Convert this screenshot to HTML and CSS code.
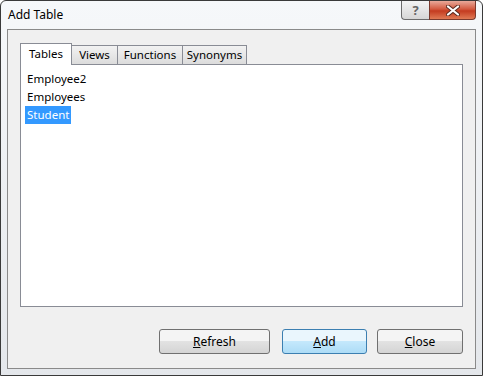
FILE: index.html
```html
<!DOCTYPE html>
<html lang="en">
<head>
    <meta charset="UTF-8">
    <title>Add Table</title>
    <link rel="stylesheet" href="styles.css">
</head>
<body>
    <div class="window">
        <div class="titlebar">
            <span class="title">Add Table</span>
            <div class="caption-buttons">
                <div class="cap help">?</div>
                <div class="cap close">
                    <svg width="14" height="11" viewBox="0 0 14 11">
                        <path d="M2 1.5 L12 9.5 M12 1.5 L2 9.5" stroke="#5a2a20" stroke-width="4" stroke-linecap="round"/>
                        <path d="M2 1.5 L12 9.5 M12 1.5 L2 9.5" stroke="#fff" stroke-width="2.2" stroke-linecap="round"/>
                    </svg>
                </div>
            </div>
        </div>
        <div class="client">
            <div class="tabs">
                <div class="tab active">Tables</div>
                <div class="tab views">Views</div>
                <div class="tab functions">Functions</div>
                <div class="tab synonyms">Synonyms</div>
            </div>
            <div class="panel">
                <div class="item">Employee2</div>
                <div class="item">Employees</div>
                <div class="item selected">Student</div>
            </div>
            <div class="buttons">
                <button type="button" class="refresh"><u>R</u>efresh</button>
                <button type="button" class="add"><u>A</u>dd</button>
                <button type="button" class="close-btn"><u>C</u>lose</button>
            </div>
        </div>
    </div>
</body>
</html>
```
FILE: styles.css
```css
html, body {
    margin: 0;
    padding: 0;
    background-color: #ffffff;
}
body {
    font-family: "Noto Sans", "Open Sans", sans-serif;
    font-size: 11.5px;
    color: #000;
}
.window {
    width: 481px;
    height: 374px;
    border: 1px solid #3a3a3a;
    border-radius: 6px 6px 0 0;
    background: linear-gradient(#f6f8fa, #e4e7eb);
    display: flex;
    flex-direction: column;
}
.titlebar {
    height: 28px;
    display: flex;
    justify-content: space-between;
    align-items: flex-start;
    padding: 0 6px 0 7px;
}
.title {
    margin-top: 5px;
    font-size: 12px;
}
.caption-buttons {
    display: flex;
}
.cap {
    height: 18px;
    border: 1px solid #6b6b6b;
    border-top: none;
    display: flex;
    align-items: center;
    justify-content: center;
}
.help {
    width: 27px;
    border-radius: 0 0 0 4px;
    background: linear-gradient(#f4f4f4, #d6d6d6);
    color: #666;
    font-weight: bold;
    font-size: 13px;
    border-right: none;
}
.close {
    width: 45px;
    border-radius: 0 0 4px 0;
    background: linear-gradient(#e9a99a, #d35a40 45%, #c43b20 55%, #e07a55);
    border-color: #7a3a2e;
}
.client {
    flex: 1;
    margin: 0 6px 6px 6px;
    border: 1px solid #8a8a8a;
    background-color: #f0f0f0;
    padding: 13px 12px 0 12px;
    display: flex;
    flex-direction: column;
}
.tabs {
    display: flex;
    align-items: flex-end;
    height: 21px;
    position: relative;
    z-index: 1;
}
.tab {
    height: 18px;
    line-height: 18px;
    text-align: center;
    border: 1px solid #898c95;
    border-bottom: none;
    border-left: none;
    background: linear-gradient(#f2f2f2, #dcdcdc);
}
.tab.active {
    width: 50px;
    height: 21px;
    line-height: 20px;
    border-left: 1px solid #898c95;
    background: #ffffff;
    margin-bottom: -1px;
}
.tab.views {
    width: 45px;
}
.tab.functions {
    width: 64px;
}
.tab.synonyms {
    width: 63px;
}
.panel {
    height: 231px;
    border: 1px solid #898c95;
    background-color: #ffffff;
    padding: 5px 4px;
}
.item {
    height: 18px;
    line-height: 18px;
    padding: 0 2px;
    width: max-content;
}
.item.selected {
    background-color: #3399ff;
    color: #ffffff;
}
.buttons {
    display: flex;
    justify-content: flex-end;
    margin-top: 22px;
}
.buttons button {
    font-family: inherit;
    font-size: 12px;
    height: 25px;
    border: 1px solid #707070;
    border-radius: 3px;
    background: linear-gradient(#f4f4f4 50%, #e2e2e2 50%, #d4d4d4);
    color: #000;
    padding: 0;
}
.buttons .refresh {
    width: 111px;
}
.buttons .add {
    width: 85px;
    margin-left: 12px;
    border-color: #3c7fb1;
    background: linear-gradient(#eaf6fd 50%, #c4e8fc 50%, #addcf6);
}
.buttons .close-btn {
    width: 86px;
    margin-left: 10px;
}
```
